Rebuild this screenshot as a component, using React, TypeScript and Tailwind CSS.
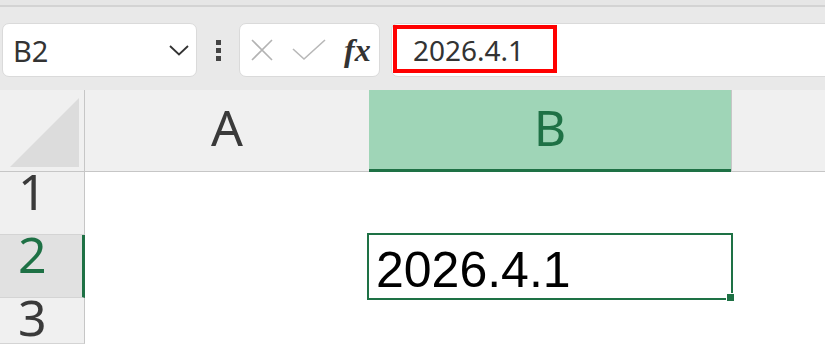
const ui = { fontFamily: '"Noto Sans", "Open Sans", sans-serif' };
const cellFont = { fontFamily: '"Liberation Sans", Arial, sans-serif' };

const green = 'border-[#1e7145]';

const RowHeader = ({ n, active }: { n: number; active?: boolean }) => (
  <div
    className={`w-[85px] shrink-0 border-b border-[#d4d4d4] pl-[18px] pt-[1px] text-[50px] leading-[36px] ${
      active ? 'bg-[#e1e1e1] border-r-[3px] border-r-[#1e7145] text-[#1e7145]' : 'bg-[#f0f0f0] border-r border-r-[#c6c6c6] text-[#3a3a3a]'
    }`}
    style={ui}
  >
    {n}
  </div>
);

export default function App() {
  return (
    <div className="w-[825px] h-[344px] overflow-hidden bg-white flex flex-col">
      {/* title strip */}
      <div className="h-[7px] bg-[#e6e6e6] border-b-2 border-[#d3d3d3] shrink-0" />

      {/* formula bar */}
      <div className="h-[83px] shrink-0 bg-[#e9e9e9] flex items-start pt-[16px]">
        <div className="ml-[2px] w-[195px] h-[54px] shrink-0 bg-white rounded-[7px] border border-[#dadada] flex items-center pl-[10px] pr-[7px]">
          <span className="flex-1 text-[29px] leading-none text-[#333]" style={ui}>
            B2
          </span>
          <svg width="20" height="11" viewBox="0 0 20 11" className="shrink-0">
            <path d="M1 1 L10 9.5 L19 1" stroke="#333" strokeWidth="1.8" fill="none" />
          </svg>
        </div>

        <div className="w-[42px] h-[54px] shrink-0 flex flex-col items-center justify-center gap-[3px]">
          <span className="w-[5px] h-[5px] bg-[#444]" />
          <span className="w-[5px] h-[5px] bg-[#444]" />
          <span className="w-[5px] h-[5px] bg-[#444]" />
        </div>

        <div className="w-[141px] h-[54px] shrink-0 bg-white rounded-[7px] border border-[#dadada] flex items-center pl-[10px]">
          <svg width="24" height="24" viewBox="0 0 24 24" className="shrink-0">
            <path d="M2 2 L22 22 M22 2 L2 22" stroke="#b3b3b3" strokeWidth="1.6" fill="none" />
          </svg>
          <svg width="34" height="22" viewBox="0 0 34 22" className="ml-[18px] shrink-0">
            <path d="M1 10 L12 20 L33 1" stroke="#b8b8b8" strokeWidth="1.6" fill="none" />
          </svg>
          <span
            className="ml-[18px] text-[32px] leading-none italic font-semibold text-[#333]"
            style={{ fontFamily: '"Liberation Serif", "Times New Roman", serif' }}
          >
            fx
          </span>
        </div>

        <div className="relative ml-[11px] w-[445px] h-[54px] shrink-0 bg-white rounded-[7px] border border-[#dadada] flex items-center pl-[21px]">
          <span className="text-[28px] leading-none text-[#333]" style={ui}>
            2026.4.1
          </span>
          <div className="absolute left-[1px] top-[1px] w-[164px] h-[48px] border-[4px] border-[#ff0000]" />
        </div>
      </div>

      {/* column headers */}
      <div className="h-[82px] shrink-0 flex bg-[#f0f0f0]">
        <div className="w-[85px] shrink-0 border-r border-b border-[#c6c6c6] relative">
          <svg width="85" height="81" viewBox="0 0 85 81" className="absolute inset-0">
            <polygon points="79,8 79,77 10,77" fill="#dcdcdc" />
          </svg>
        </div>
        <div
          className="w-[284px] shrink-0 border-b border-[#c6c6c6] flex justify-center pt-[12px] text-[50px] leading-none text-[#3a3a3a]"
          style={ui}
        >
          A
        </div>
        <div
          className={`w-[362px] shrink-0 bg-[#9fd5b7] border-b-[3px] ${green} flex justify-center pt-[12px] text-[50px] leading-none text-[#1e7145]`}
          style={ui}
        >
          B
        </div>
        <div className="flex-1 border-l border-b border-[#c6c6c6]" />
      </div>

      {/* rows */}
      <div className="h-[63px] shrink-0 flex">
        <RowHeader n={1} />
        <div className="flex-1" />
      </div>

      <div className="h-[63px] shrink-0 flex">
        <RowHeader n={2} active />
        <div className="w-[284px] shrink-0" />
        <div className="relative w-[362px] shrink-0">
          <div className="pl-[7px] pt-[10px] text-[50px] leading-none text-black" style={cellFont}>
            2026.4.1
          </div>
          <div className={`absolute -left-[2px] -top-[2px] w-[366px] h-[67px] border-2 ${green}`} />
          <div className="absolute left-[357px] top-[58px] w-[9px] h-[9px] bg-[#1e7145] border border-white" />
        </div>
        <div className="flex-1" />
      </div>

      <div className="h-[46px] shrink-0 flex">
        <RowHeader n={3} />
        <div className="flex-1" />
      </div>
    </div>
  );
}
